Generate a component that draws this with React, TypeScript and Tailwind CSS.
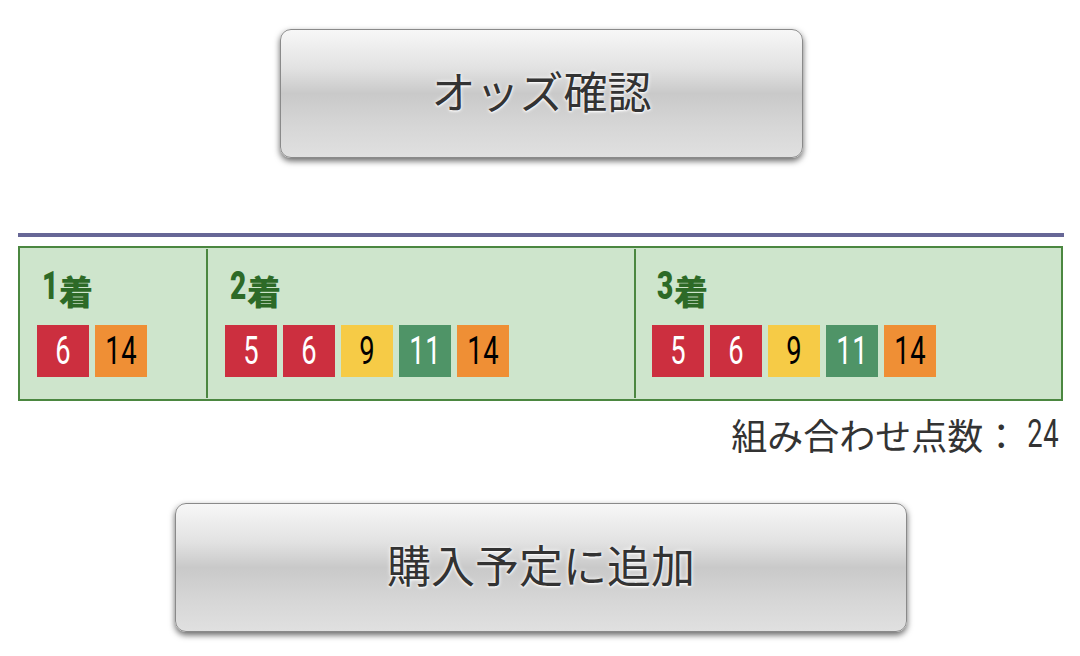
import React from "react";

type Pick = { n: number; color: "red" | "orange" | "yellow" | "green" };

const chip: Record<Pick["color"], string> = {
  red: "bg-[#cc2f3f] text-white",
  orange: "bg-[#ef8f35] text-black",
  yellow: "bg-[#f6cb46] text-black",
  green: "bg-[#4f9467] text-white",
};

const num = "[font-family:'Roboto','Liberation_Sans',sans-serif]";

const cjk = "[font-family:'Noto_Sans_CJK_JP','Noto_Sans',sans-serif]";

// Narrow digits: a regular face squeezed horizontally
function Digits({ children, className }: { children: React.ReactNode; className: string }) {
  return <span className={`inline-block origin-center scale-x-[0.72] ${num} ${className}`}>{children}</span>;
}

function Chip({ p }: { p: Pick }) {
  return (
    <div
      className={`w-[52px] h-[52px] flex items-center justify-center leading-none ${chip[p.color]}`}
    >
      <Digits className="text-[38px] font-normal tracking-[1px]">{p.n}</Digits>
    </div>
  );
}

function Place({ label, picks, className }: { label: string; picks: Pick[]; className: string }) {
  return (
    <div className={`flex flex-col ${className}`}>
      <div className="h-[40px] mt-[18px] pl-[5px] flex items-end text-[#2d6a27] font-bold leading-none">
        <span className={`inline-block origin-left scale-x-[0.72] w-[16px] text-[39px] font-black ${num}`}>{label}</span>
        <span className={`text-[34px] font-black ${cjk} ml-[1px] -mb-[2px]`}>着</span>
      </div>
      <div className="mt-[19px] flex gap-[6px]">
        {picks.map((p) => (
          <Chip key={p.n} p={p} />
        ))}
      </div>
    </div>
  );
}

function GlossButton({ label, className }: { label: string; className: string }) {
  return (
    <button
      className={`h-[129px] pb-[8px] rounded-[11px] border border-[#8a8a8a] bg-[linear-gradient(to_bottom,#f7f7f7_0%,#e2e2e2_30%,#c9c9c9_50%,#d6d6d6_75%,#e0e0e0_100%)] shadow-[0_3px_6px_rgba(0,0,0,0.6)] flex items-center justify-center text-[44px] text-[#333] ${cjk} [text-shadow:0_0_4px_#ffffff,0_1px_2px_#ffffff] ${className}`}
    >
      {label}
    </button>
  );
}

export default function App() {
  const all: Pick[] = [
    { n: 5, color: "red" },
    { n: 6, color: "red" },
    { n: 9, color: "yellow" },
    { n: 11, color: "green" },
    { n: 14, color: "orange" },
  ];
  const first: Pick[] = [
    { n: 6, color: "red" },
    { n: 14, color: "orange" },
  ];

  return (
    <div className={`w-[1080px] h-[656px] bg-white overflow-hidden ${cjk}`}>
      <div className="pt-[29px] pl-[280px]">
        <GlossButton label="オッズ確認" className="w-[523px]" />
      </div>

      <div className="mt-[75px] ml-[18px] w-[1046px] h-[4px] bg-[#676796]" />

      <div className="mt-[9px] ml-[18px] w-[1045px] h-[155px] border-2 border-[#4b8740] bg-[#cee5cc] flex">
        <Place label="1" picks={first} className="w-[186px] pl-[17px]" />
        <div className="w-[2px] my-[1px] bg-[#4b8740]" />
        <Place label="2" picks={all} className="w-[426px] pl-[17px]" />
        <div className="w-[2px] my-[1px] bg-[#4b8740]" />
        <Place label="3" picks={all} className="flex-1 pl-[16px]" />
      </div>

      <div className="mt-[10px] pr-[14px] flex justify-end items-center text-[36px] leading-[46px] text-[#333]">
        <span>組み合わせ点数：</span>
        <Digits className="text-[38px] font-normal tracking-[1px] ml-[2px]">24</Digits>
      </div>

      <div className="mt-[46px] pl-[175px]">
        <GlossButton label="購入予定に追加" className="w-[732px]" />
      </div>
    </div>
  );
}
